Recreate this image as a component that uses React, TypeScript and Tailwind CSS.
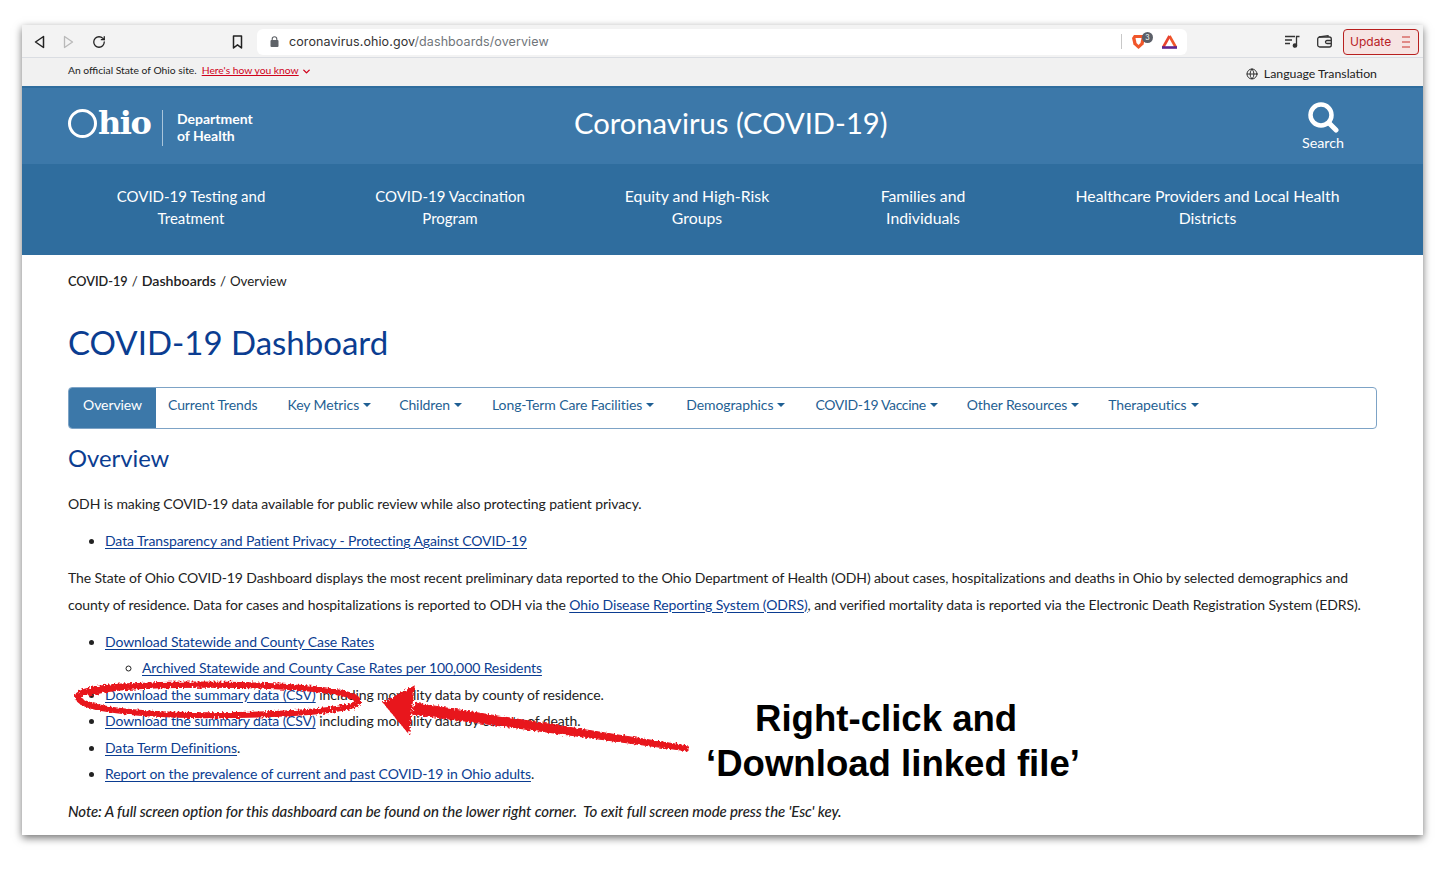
import { ChevronDown, Globe, RotateCw } from "lucide-react";

const topNav = [
  { label: ["COVID-19 Testing and", "Treatment"], w: "w-[338px] text-[15px]" },
  { label: ["COVID-19 Vaccination", "Program"], w: "w-[180px] text-[15px]" },
  { label: ["Equity and High-Risk", "Groups"], w: "w-[314px] text-[15.800px]" },
  { label: ["Families and", "Individuals"], w: "w-[138px] text-[15.800px]" },
  { label: ["Healthcare Providers and Local Health", "Districts"], w: "w-[431px] text-[15.800px]" },
];

const tabs = [
  { label: "Current Trends", caret: false, ml: "ml-[12px]" },
  { label: "Key Metrics", caret: true, ml: "ml-[30px]" },
  { label: "Children", caret: true, ml: "ml-[28px]" },
  { label: "Long-Term Care Facilities", caret: true, ml: "ml-[30px]" },
  { label: "Demographics", caret: true, ml: "ml-[32px]" },
  { label: "COVID-19 Vaccine", caret: true, ml: "ml-[30px] tracking-[-0.35px]" },
  { label: "Other Resources", caret: true, ml: "ml-[29px]" },
  { label: "Therapeutics", caret: true, ml: "ml-[29px]" },
];

function A({ children }: { children: React.ReactNode }) {
  return <a className="text-[#0b3d91] underline underline-offset-2">{children}</a>;
}

function Toolbar() {
  return (
    <div className="h-[33px] bg-[#f3f3f3] border-b border-[#dadde2] flex items-center pt-[1px] font-['Inter',sans-serif]">
      <svg className="ml-[12px] w-[11px] h-[14px]" viewBox="0 0 11 14" fill="none" stroke="#222" strokeWidth="1.5" strokeLinejoin="round">
        <path d="M9.5 1.5v11L1.5 7z" />
      </svg>
      <svg className="ml-[18px] w-[11px] h-[14px]" viewBox="0 0 11 14" fill="none" stroke="#b9b9b9" strokeWidth="1.3" strokeLinejoin="round">
        <path d="M1.5 1.5v11L9.5 7z" />
      </svg>
      <RotateCw className="ml-[18px] w-[14px] h-[14px] text-[#222]" strokeWidth={2.2} />
      <svg className="ml-[126px] w-[11px] h-[14px]" viewBox="0 0 11 14" fill="none" stroke="#222" strokeWidth="1.5" strokeLinejoin="round">
        <path d="M1.5 1h8v12L5.5 9.8 1.5 13z" />
      </svg>
      <div className="ml-[14px] w-[930px] h-[26px] bg-white rounded-md flex items-center pl-[13px]">
        <svg className="w-[9px] h-[11px]" viewBox="0 0 9 11" fill="#5f6368">
          <rect x="0.5" y="4" width="8" height="7" rx="1" />
          <path d="M2.2 4.5V3a2.3 2.3 0 0 1 4.6 0v1.500" fill="none" stroke="#5f6368" strokeWidth="1.100" />
        </svg>
        <span className="ml-[10px] mt-[1px] text-[12.500px] tracking-[0.1px] text-[#333]">
          coronavirus.ohio.gov<span className="text-[#70757a]">/dashboards/overview</span>
        </span>
        <div className="ml-auto w-px h-[15px] bg-[#c8c8c8]" />
        <div className="relative ml-[10px] w-[13px] h-[15px]">
          <svg className="w-[13px] h-[15px]" viewBox="0 0 13 15">
            <path d="M2 1h9l2 3-1.500 6.500L6.500 15 1.500 10.500 0 4z" fill="#f0562a" />
            <path d="M3.500 4h6l-1 5-2 2-2-2z" fill="#fff" />
          </svg>
          <span className="absolute -top-[2px] left-[10px] w-[11px] h-[11px] rounded-full bg-[#5b5f68] text-white text-[7px] leading-[11px] text-center">3</span>
        </div>
        <svg className="ml-[16px] w-[17px] h-[15px]" viewBox="0 0 17 15" fill="none" strokeWidth="2.600">
          <path d="M8.500 2 15 13.500" stroke="#f0562a" />
          <path d="M8.500 2 2 13.500" stroke="#e8432e" />
          <path d="M1 13.500h15" stroke="#5e2590" />
        </svg>
        <div className="w-[9px]" />
      </div>
      <svg className="ml-[98px] w-[15px] h-[13px]" viewBox="0 0 15 13" fill="none" stroke="#333" strokeWidth="1.300">
        <path d="M0 1.500h10M0 5h7M0 8.500h5M11.500 10V1.500h3" />
        <circle cx="10" cy="10.500" r="1.700" fill="#333" />
      </svg>
      <svg className="ml-[17px] w-[15px] h-[13px]" viewBox="0 0 15 13" fill="none" stroke="#333" strokeWidth="1.300">
        <rect x="0.700" y="2" width="13.600" height="10" rx="2" />
        <path d="M2 2l9-1.300V2M14 5.500h-4a1.500 1.500 0 0 0 0 3h4" />
      </svg>
      <div className="ml-[11px] w-[76px] h-[26px] rounded-[4px] border border-[#b8201f] bg-[#f6e4e3] flex items-center pl-[6px] text-[12px] text-[#b8201f]">
        Update
        <svg className="ml-[11px] w-[8px] h-[12px]" viewBox="0 0 8 12" stroke="#c9302c" strokeWidth="1.200">
          <path d="M0 1h8M0 6h8M0 11h8" />
        </svg>
      </div>
    </div>
  );
}

function Banner() {
  return (
    <div className="h-[28px] bg-[#f1f1f1] flex pl-[46px] pr-[46px] justify-between">
      <div className="flex items-center h-[26px] text-[10.300px] text-[#222]">
        An official State of Ohio site.
        <a className="ml-[5px] text-[#d0021b] underline underline-offset-1">Here's how you know</a>
        <ChevronDown className="ml-[2px] w-[11px] h-[11px] text-[#d0021b]" strokeWidth={3} />
      </div>
      <div className="flex items-center pt-[4px] text-[12.300px] text-[#222]">
        <Globe className="w-[12px] h-[12px] mr-[6px]" strokeWidth={1.800} />
        Language Translation
      </div>
    </div>
  );
}

function Header() {
  return (
    <div className="h-[78px] bg-[#3c78a9] border-t-2 border-[#2f6d9e] flex items-start text-white">
      <div className="w-[477px] pl-[46px] flex items-start">
        <div className="mt-[21px] w-[29px] h-[29px] rounded-full border-[3px] border-white" />
        <span className="mt-[20px] font-['DejaVu_Serif',serif] font-bold text-[32px] leading-[30px] tracking-[-1.500px] ml-[1px] w-[60px]">hio</span>
        <div className="ml-[4px] mt-[22px] w-px h-[36px] bg-[#a9c5db]" />
        <div className="ml-[14px] mt-[22px] text-[14px] leading-[17px] font-bold">
          Department
          <br />
          of Health
        </div>
      </div>
      <div className="w-[500px] pt-[15px] pl-[75px] text-[29.200px] leading-[40px] whitespace-nowrap">Coronavirus (COVID-19)</div>
      <div className="ml-auto mr-[78px] w-[44px] flex flex-col items-center pt-[14px]">
        <svg className="w-[31px] h-[31px]" viewBox="0 0 31 31" fill="none" stroke="#fff">
          <circle cx="13" cy="13" r="10.500" strokeWidth="4.500" />
          <path d="M21 21l7 7" strokeWidth="5" strokeLinecap="round" />
        </svg>
        <span className="text-[14.300px] leading-[18px] mt-[1px]">Search</span>
      </div>
    </div>
  );
}

function TopNav() {
  return (
    <div className="h-[91px] bg-[#2f6d9e] flex text-white leading-[22px] pt-[21px] text-center">
      {topNav.map((n) => (
        <div key={n.label[0]} className={`${n.w} whitespace-nowrap`}>
          {n.label[0]}
          <br />
          {n.label[1]}
        </div>
      ))}
    </div>
  );
}

function Tabs() {
  return (
    <div className="mt-[22px] h-[42px] rounded-[4px] border border-[#7da3c6] flex items-center text-[14px] text-[#1f5f93] overflow-hidden">
      <div className="h-full w-[87px] bg-[#3c78a9] text-white flex items-center justify-center pb-[8px]">Overview</div>
      {tabs.map((t) => (
        <div key={t.label} className={`${t.ml} flex items-center whitespace-nowrap mb-[8px]`}>
          {t.label}
          {t.caret && <span className="ml-[4px] mt-[1px] border-x-[4.500px] border-x-transparent border-t-[4.500px] border-t-[#1f5f93]" />}
        </div>
      ))}
    </div>
  );
}

function Annotation() {
  return (
    <>
      <svg className="absolute left-[40px] top-[650px] w-[680px] h-[120px] pointer-events-none" viewBox="40 650 680 120" fill="none">
        <defs>
          <filter id="rough" x="-5%" y="-20%" width="110%" height="140%">
            <feTurbulence type="fractalNoise" baseFrequency="0.5" numOctaves="2" seed="4" />
            <feDisplacementMap in="SourceGraphic" scale="6" />
          </filter>
        </defs>
        <g filter="url(#rough)" stroke="#e8141c">
          <path d="M88 694C110 684 180 684 240 685C310 687 360 692 358 702C352 713 250 716 190 715C130 714 76 708 78 696C80 690 104 687 134 686" strokeWidth="6" />
          <path d="M688 746L688 751L412 714L415 703Z" fill="#e8141c" strokeWidth="1" />
          <path d="M385 703L413 688L408 731Z" fill="#e8141c" strokeWidth="3" />
        </g>
      </svg>
      <div className="absolute left-[683px] top-[696px] w-[410px] font-['Liberation_Sans',sans-serif] font-bold text-[36.600px] leading-[45px] text-black whitespace-nowrap">
        <div className="pl-[72px]">Right-click and</div>
        <div className="pl-[23px]">‘Download linked file’</div>
      </div>
    </>
  );
}

export default function App() {
  return (
    <div className="relative w-[1456px] h-[876px] bg-white pt-[25px] pl-[22px] overflow-hidden font-['Lato','Open_Sans',sans-serif]">
      <div className="w-[1401px] h-[810px] bg-white shadow-[0_3px_8px_rgba(0,0,0,0.55)] overflow-hidden">
        <Toolbar />
        <Banner />
        <Header />
        <TopNav />
        <main className="px-[46px] text-[14px] tracking-[-0.1px] text-[#222]">
          <div className="pt-[16px] leading-[20px] text-[13.300px] tracking-normal">
            <b className="font-semibold text-[12.700px]">COVID-19</b>
            <span className="mx-[4px]">/</span>
            <b className="font-semibold text-[14.200px]">Dashboards</b>
            <span className="mx-[4px]">/</span>
            Overview
          </div>
          <h1 className="mt-[29px] text-[33px] leading-[45px] tracking-normal text-[#0b3d91]">COVID-19 Dashboard</h1>
          <Tabs />
          <h2 className="mt-[12px] text-[23.800px] leading-[34px] tracking-normal text-[#0b3d91]">Overview</h2>
          <p className="mt-[15px] leading-[27px]">ODH is making COVID-19 data available for public review while also protecting patient privacy.</p>
          <ul className="mt-[11px] list-disc pl-[37px] leading-[26.500px]">
            <li>
              <A>Data Transparency and Patient Privacy - Protecting Against COVID-19</A>
            </li>
          </ul>
          <p className="mt-[9px] leading-[27px]">
            The State of Ohio COVID-19 Dashboard displays the most recent preliminary data reported to the Ohio Department of Health (ODH) about cases, hospitalizations and deaths in Ohio by selected demographics and county of residence. Data for cases and hospitalizations is reported to ODH via the <A>Ohio Disease Reporting System (ODRS)</A>, and verified mortality data is reported via the Electronic Death Registration System (EDRS).
          </p>
          <ul className="mt-[11px] list-disc pl-[37px] leading-[26.600px]">
            <li>
              <A>Download Statewide and County Case Rates</A>
              <ul className="list-[circle] pl-[37px]">
                <li>
                  <A>Archived Statewide and County Case Rates per 100,000 Residents</A>
                </li>
              </ul>
            </li>
            <li>
              <A>Download the summary data (CSV)</A> including mortality data by county of residence.
            </li>
            <li>
              <A>Download the summary data (CSV)</A> including mortality data by county of death.
            </li>
            <li>
              <A>Data Term Definitions</A>.
            </li>
            <li>
              <A>Report on the prevalence of current and past COVID-19 in Ohio adults</A>.
            </li>
          </ul>
          <p className="mt-[10px] leading-[27px] text-[15px] italic font-medium">Note: A full screen option for this dashboard can be found on the lower right corner.&nbsp; To exit full screen mode press the 'Esc' key.</p>
        </main>
      </div>
      <Annotation />
    </div>
  );
}
